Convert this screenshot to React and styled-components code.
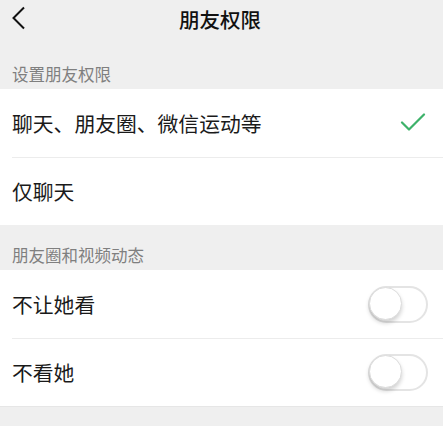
import React from "react";
import styled, { createGlobalStyle } from "styled-components";

const Global = createGlobalStyle`
  html, body { margin: 0; padding: 0; background: #efefef; }
  body { font-family: "Noto Sans CJK SC", "Noto Sans", sans-serif; }
`;

const Page = styled.div`
  width: 443px;
  height: 426px;
  background: #efefef;
  overflow: hidden;
`;

const NavBar = styled.div`
  position: relative;
  height: 44px;
  display: flex;
  align-items: center;
  justify-content: center;
  padding-bottom: 6px;
  box-sizing: border-box;
`;

const BackBtn = styled.div`
  position: absolute;
  left: 11px;
  top: 6px;
  width: 16px;
  height: 24px;
  display: flex;
`;

const Title = styled.div`
  font-size: 20.5px;
  font-weight: 500;
  color: #111;
  line-height: 1;
  margin-left: -3px;
`;

const SectionLabel = styled.div`
  height: 45px;
  box-sizing: border-box;
  padding: 0 12px 7px;
  display: flex;
  align-items: flex-end;
  font-size: 16.5px;
  color: #7f7f7f;
  line-height: 1;
`;

const Group = styled.div`
  background: #fff;
  border-bottom: ${(p) => (p.$bordered ? "1px solid #e6e6e6" : "none")};
`;

const Row = styled.div`
  height: 68px;
  display: flex;
  align-items: center;
  justify-content: space-between;
  padding-right: 15px;
  margin-left: 12px;
  box-sizing: border-box;
  border-top: ${(p) => (p.$divider ? "1px solid #ececec" : "none")};
`;

const Label = styled.div`
  font-size: 20.8px;
  color: #1a1a1a;
  line-height: 1;
`;

const Track = styled.div`
  width: 60px;
  height: 37px;
  box-sizing: border-box;
  border: 2px solid #e4e4e4;
  border-radius: 19px;
  position: relative;
`;

const Knob = styled.div`
  position: absolute;
  left: -1px;
  top: -1px;
  width: 33px;
  height: 33px;
  border-radius: 50%;
  background: #fff;
  border: 1px solid #dcdcdc;
  box-shadow: 0 3px 4px rgba(0, 0, 0, 0.18);
  box-sizing: border-box;
`;

const CheckIcon = styled.svg`
  margin-right: 2px;
  margin-top: -1px;
`;

const Toggle = () => (
  <Track>
    <Knob />
  </Track>
);

const Check = () => (
  <CheckIcon width="26" height="20" viewBox="0 0 26 20">
    <path d="M2 9.5 L9 16.5 L24 1.5" fill="none" stroke="#3db26a" strokeWidth="2.2" strokeLinecap="round" strokeLinejoin="round" />
  </CheckIcon>
);

export default function App() {
  return (
    <Page>
      <Global />
      <NavBar>
        <BackBtn>
          <svg width="16" height="24" viewBox="0 0 16 24">
            <path d="M13 1.5 L2.5 12 L13 22.5" fill="none" stroke="#111" strokeWidth="2" />
          </svg>
        </BackBtn>
        <Title>朋友权限</Title>
      </NavBar>
      <SectionLabel>设置朋友权限</SectionLabel>
      <Group>
        <Row>
          <Label>聊天、朋友圈、微信运动等</Label>
          <Check />
        </Row>
        <Row $divider>
          <Label>仅聊天</Label>
        </Row>
      </Group>
      <SectionLabel>朋友圈和视频动态</SectionLabel>
      <Group $bordered>
        <Row>
          <Label>不让她看</Label>
          <Toggle />
        </Row>
        <Row $divider>
          <Label>不看她</Label>
          <Toggle />
        </Row>
      </Group>
    </Page>
  );
}
